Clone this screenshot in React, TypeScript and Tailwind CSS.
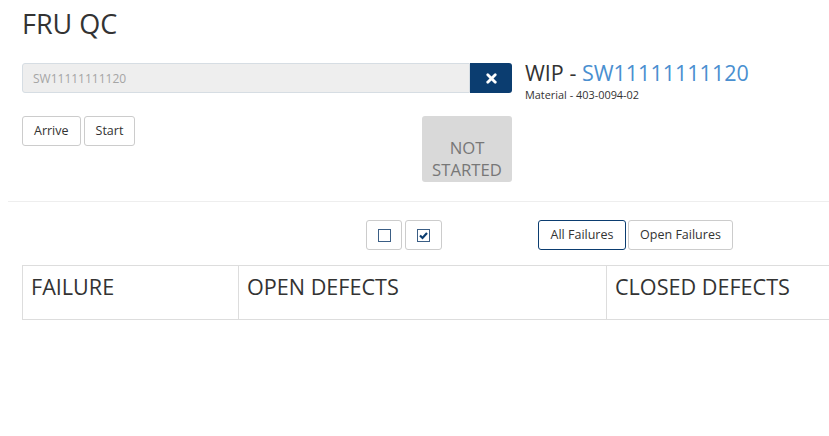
import { X } from "lucide-react";

const columns = [
  { label: "FAILURE", width: "w-[217px]" },
  { label: "OPEN DEFECTS", width: "w-[368px]" },
  { label: "CLOSED DEFECTS", width: "w-[368px]" },
];

export default function App() {
  return (
    <div className="h-[436px] w-[829px] overflow-hidden bg-white font-['Open_Sans',sans-serif] text-[#333]">
      <div className="px-[22px] pt-[8px]">
        <h1 className="text-[27px] leading-[32px]">FRU QC</h1>

        <div className="mt-[23px] flex">
          <div className="w-[490px]">
            <div className="flex h-[30px]">
              <input
                readOnly
                value="SW11111111120"
                className="h-[30px] flex-1 rounded-l-[3px] border border-[#d6dde3] bg-[#eeeeee] px-[10px] text-[12px] text-[#a5a5a5] outline-none"
              />
              <button className="flex h-[30px] w-[42px] items-center justify-center rounded-r-[3px] bg-[#0b3d70] text-white">
                <X size={15} strokeWidth={4.5} />
              </button>
            </div>
            <div className="mt-[23px] flex items-start justify-between">
              <div className="flex gap-[3px]">
                <button className="h-[30px] rounded-[3px] border border-[#cccccc] bg-white px-[11px] text-[12.5px]">
                  Arrive
                </button>
                <button className="h-[30px] rounded-[3px] border border-[#cccccc] bg-white px-[11px] text-[12.5px]">
                  Start
                </button>
              </div>
              <div className="flex h-[66px] w-[90px] flex-col items-center justify-end rounded-[3px] bg-[#d9d9d9] pb-[1px] text-[16.7px] leading-[22px] text-[#777777]">
                <span>NOT</span>
                <span>STARTED</span>
              </div>
            </div>
          </div>
          <div className="ml-[13px] -mt-[4px]">
            <h2 className="text-[21.5px] leading-[28px]">
              WIP - <span className="text-[#4a8fd0]">SW11111111120</span>
            </h2>
            <p className="mt-[1px] text-[10.9px] leading-[14px]">Material - 403-0094-02</p>
          </div>
        </div>
      </div>

      <div className="ml-[8px] mt-[19px] border-t border-[#eeeeee]" />

      <div className="mt-[18px] flex px-[22px]">
        <div className="ml-[344px] flex gap-[3px]">
          <button className="flex h-[30px] w-[36px] items-center justify-center rounded-[3px] border border-[#cccccc] bg-white">
            <span className="block h-[13px] w-[13px] border border-[#3b5e85]" />
          </button>
          <button className="flex h-[30px] w-[37px] items-center justify-center rounded-[3px] border border-[#cccccc] bg-white">
            <svg width="13" height="13" viewBox="0 0 13 13">
              <rect x="0.5" y="0.5" width="12" height="12" fill="none" stroke="#3b5e85" />
              <path d="M3 6.5 L5.5 9 L10 4" fill="none" stroke="#0b3d70" strokeWidth="2.2" />
            </svg>
          </button>
        </div>
        <div className="ml-[96px] flex gap-[2px]">
          <button className="h-[30px] w-[88px] rounded-[3px] border border-[#0b3d70] bg-white text-[12.5px]">
            All Failures
          </button>
          <button className="h-[30px] w-[105px] rounded-[3px] border border-[#cccccc] bg-white text-[12.5px]">
            Open Failures
          </button>
        </div>
      </div>

      <div className="ml-[22px] mt-[15px] flex w-[953px]">
        {columns.map((col, i) => (
          <div
            key={col.label}
            className={`${col.width} h-[55px] border border-[#dddddd] px-[8px] pt-[7px] text-[21.6px] leading-[28px] ${i > 0 ? "border-l-0" : ""}`}
          >
            {col.label}
          </div>
        ))}
      </div>
    </div>
  );
}
